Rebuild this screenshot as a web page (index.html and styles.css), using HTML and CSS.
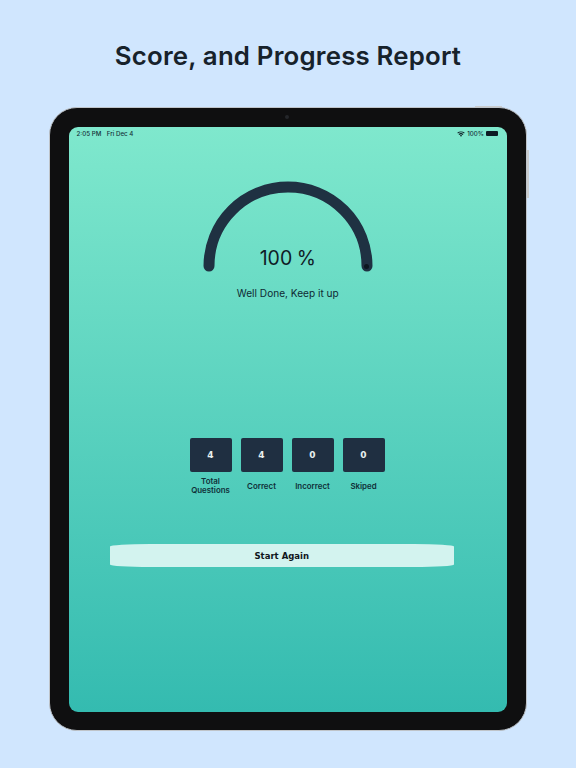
FILE: index.html
```html
<!DOCTYPE html>
<html lang="en">
<head>
<meta charset="utf-8">
<title>Score, and Progress Report</title>
<link rel="stylesheet" href="styles.css">
</head>
<body>
<h1 class="title">Score, and Progress Report</h1>
<div class="device">
  <span class="side-btn side-top"></span>
  <span class="side-btn side-right"></span>
  <span class="camera"></span>
  <main class="screen">
    <div class="status">
      <div class="status-left"><span>2:05 PM</span><span>Fri Dec 4</span></div>
      <div class="status-right">
        <svg class="wifi" viewBox="0 0 12 9" aria-hidden="true">
          <path d="M6 8.6 4.3 6.8a2.5 2.5 0 0 1 3.4 0Z"/>
          <path d="M3.4 5.9 2.4 4.8a5.3 5.3 0 0 1 7.2 0l-1 1.1a3.9 3.9 0 0 0-5.2 0Z"/>
          <path d="M1.5 3.9.4 2.8a8.2 8.2 0 0 1 11.2 0l-1.1 1.1a6.7 6.7 0 0 0-9 0Z"/>
        </svg>
        <span>100%</span>
        <span class="battery"></span>
      </div>
    </div>
    <section class="gauge">
      <svg class="arc" viewBox="0 0 170 92" aria-hidden="true">
        <path class="arc-line" d="M6 85A79 79 0 0 1 164 85"/>
        <circle class="arc-dot" cx="163.500" cy="85.500" r="2.500"/>
      </svg>
      <div class="percent">100 %</div>
    </section>
    <p class="message">Well Done, Keep it up</p>
    <section class="stats">
      <div class="stat"><div class="box">4</div><div class="label">Total Questions</div></div>
      <div class="stat"><div class="box">4</div><div class="label">Correct</div></div>
      <div class="stat"><div class="box">0</div><div class="label">Incorrect</div></div>
      <div class="stat"><div class="box">0</div><div class="label">Skiped</div></div>
    </section>
    <button class="again" type="button">Start Again</button>
  </main>
</div>
</body>
</html>
```

FILE: styles.css
```css
* { box-sizing: border-box; }

html, body {
  margin: 0;
  height: 100%;
}

body {
  width: 576px;
  height: 768px;
  overflow: hidden;
  background: #d0e6fe;
  font-family: Inter, "Liberation Sans", sans-serif;
  color: #0f1c26;
  display: flex;
  flex-direction: column;
  align-items: center;
}

.title {
  margin: 0;
  height: 107px;
  padding-top: 38px;
  font-size: 25.800px;
  line-height: 36px;
  font-weight: 600;
  letter-spacing: 0.2px;
  color: #17222b;
  white-space: nowrap;
}

.device {
  position: relative;
  width: 478px;
  height: 624px;
  padding: 18.500px 19px 18px 18.500px;
  background: #0f0f10;
  border: 1.500px solid #bfc4c9;
  border-radius: 28px;
}

.side-btn {
  position: absolute;
  background: #c9ccce;
}

.side-top {
  top: -2.500px;
  right: 24px;
  width: 27px;
  height: 1.500px;
}

.side-right {
  top: 42px;
  right: -2.500px;
  width: 1.500px;
  height: 48px;
}

.camera {
  position: absolute;
  top: 7px;
  left: 235px;
  width: 4px;
  height: 4px;
  border-radius: 50%;
  background: #24262a;
}

.screen {
  height: 100%;
  border-radius: 9px;
  background: linear-gradient(180deg, #7fe8cd 0%, #34bbb0 100%);
  display: flex;
  flex-direction: column;
  align-items: center;
  overflow: hidden;
}

.status {
  width: 100%;
  height: 11px;
  padding: 0 9px 0 8px;
  display: flex;
  justify-content: space-between;
  align-items: flex-end;
  font-size: 6.200px;
  line-height: 8px;
  font-weight: 500;
  color: #15323a;
}

.status-left {
  display: flex;
  gap: 5.500px;
}

.status-right {
  display: flex;
  align-items: center;
  gap: 2px;
}

.wifi {
  width: 8px;
  height: 6px;
  fill: #0d1c24;
}

.battery {
  width: 12px;
  height: 5px;
  border-radius: 1px;
  background: #0d1c24;
}

.gauge {
  position: relative;
  width: 170px;
  height: 92px;
  margin-top: 43.500px;
}

.arc {
  display: block;
  width: 170px;
  height: 92px;
}

.arc-line {
  fill: none;
  stroke: #1f3142;
  stroke-width: 11;
  stroke-linecap: round;
}

.arc-dot {
  fill: #0d1720;
}

.percent {
  position: absolute;
  left: 0;
  right: 0;
  top: 64px;
  text-align: center;
  font-size: 19.500px;
  line-height: 26px;
  font-weight: 400;
  word-spacing: -1px;
  color: #0f1c26;
}

.message {
  margin: 13px 0 0;
  font-size: 10.100px;
  line-height: 14px;
  color: #0f2a33;
}

.stats {
  display: flex;
  gap: 9px;
  margin: 138px 1.500px 0 0;
  width: 195px;
}

.stat {
  width: 42px;
  flex: none;
  display: flex;
  flex-direction: column;
  align-items: center;
}

.box {
  width: 42px;
  height: 34px;
  border-radius: 2px;
  background: #1f2f41;
  color: #e9efef;
  font-family: "DejaVu Sans", sans-serif;
  font-size: 9px;
  font-weight: 700;
  display: flex;
  align-items: center;
  justify-content: center;
}

.label {
  height: 24px;
  margin-top: 2px;
  display: flex;
  align-items: center;
  text-align: center;
  font-size: 7.900px;
  line-height: 9px;
  font-weight: 600;
  color: #0f2f38;
  white-space: normal;
}

.again {
  width: 344px;
  height: 23px;
  margin: 46px 12px 0 0;
  padding: 0;
  border: 0;
  border-radius: 40px / 2.500px;
  background: #d3f3ef;
  color: #10161b;
  font-family: "DejaVu Sans", sans-serif;
  font-size: 8.500px;
  font-weight: 700;
}
```
